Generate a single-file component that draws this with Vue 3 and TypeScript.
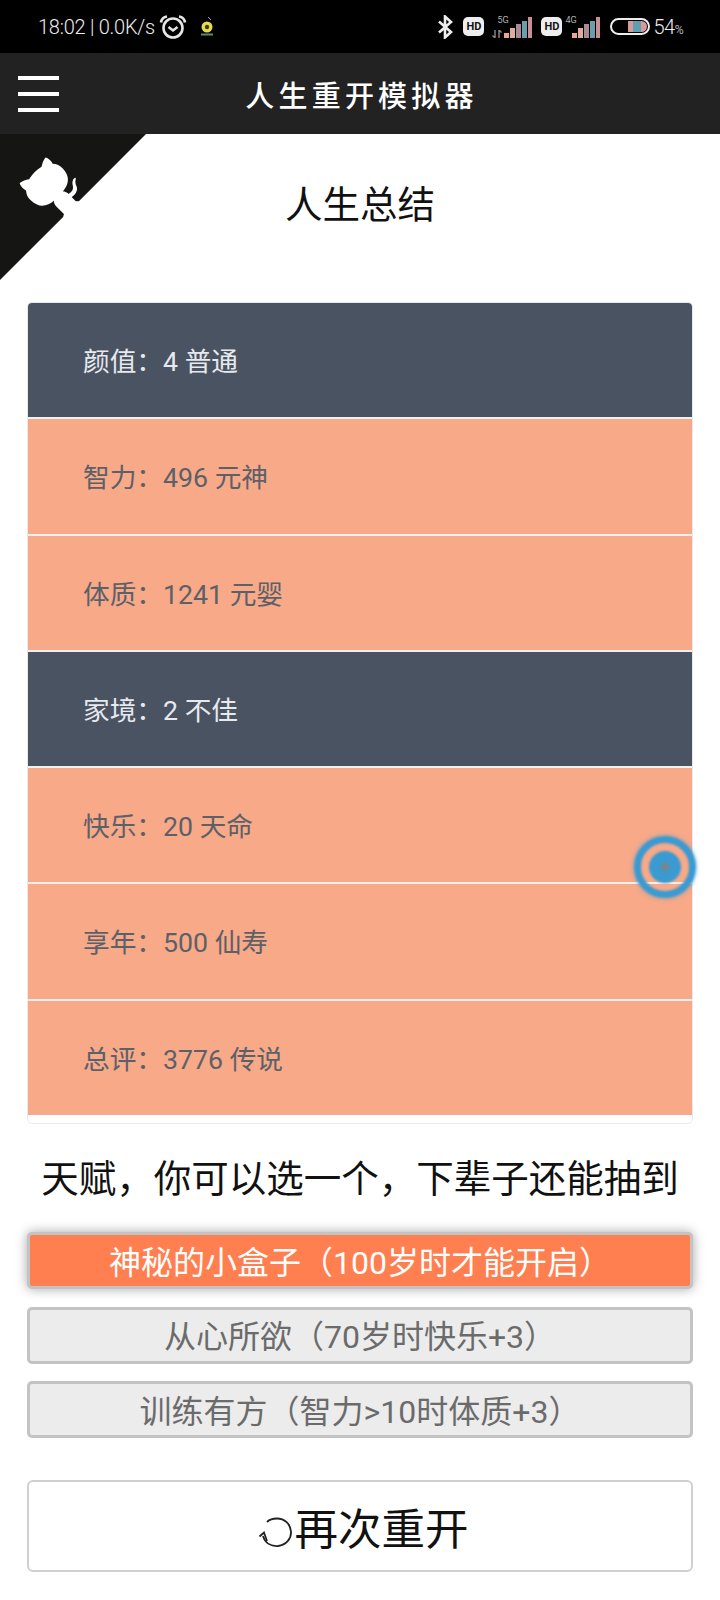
<template>
  <div class="page">
    <div class="status">
      <span class="clock">18:02 | 0.0K/s</span>
      <svg class="alarm" width="28" height="26" viewBox="0 0 28 26">
        <circle cx="14" cy="14" r="9.5" fill="none" stroke="#e6e6e6" stroke-width="2.6" />
        <path d="M9.5 13l4.5 3.5 4.5-3.5" fill="none" stroke="#e6e6e6" stroke-width="2.4" />
        <path d="M2 8.5C2.5 5 5 3 8 2.5M26 8.5C25.500 5 23 3 20 2.500" fill="none" stroke="#e6e6e6" stroke-width="2.6" />
      </svg>
      <svg class="dot-app" width="16" height="22" viewBox="0 0 16 22">
        <path d="M9 1l3 3" stroke="#8fa0a8" stroke-width="1" />
        <circle cx="8" cy="11" r="5.500" fill="#e7dc4e" />
        <circle cx="8" cy="11" r="2.200" fill="#3c3a16" />
        <rect x="2" y="17.500" width="12" height="2" fill="#5c8c74" />
      </svg>
      <div class="status-right">
        <svg class="bt" width="17" height="24" viewBox="0 0 17 24">
          <path d="M2 6.500l12 10.500-6 5.500V1.500l6 5.500-12 10.500" fill="none" stroke="#eee" stroke-width="2.600" />
        </svg>
        <span class="hd">HD</span>
        <div class="signal first">
          <span class="net">5G</span>
          <svg class="arrows" width="10" height="8" viewBox="0 0 10 8">
            <path d="M3 0v8M0.500 5.500L3 8M7 0v8M7 0l2.500 2.500" stroke="#8a8a8a" stroke-width="1.400" fill="none" />
          </svg>
          <i v-for="b in bars" :key="b.h" :style="{ height: b.h + 'px', background: b.c }" />
        </div>
        <span class="hd second">HD</span>
        <div class="signal">
          <span class="net four">4G</span>
          <i v-for="b in bars" :key="b.h" :style="{ height: b.h + 'px', background: b.c }" />
        </div>
        <div class="battery"><div class="level" /></div>
        <span class="pct">54<small>%</small></span>
      </div>
    </div>

    <header class="topbar">
      <div class="burger"><i /><i /><i /></div>
      <h1>人生重开模拟器</h1>
    </header>

    <main class="content">
      <svg class="corner" width="146" height="146" viewBox="0 0 250 250">
        <g transform="translate(250 0) scale(-1 1)">
          <path d="M0,0 L115,115 L130,115 L142,142 L250,250 L250,0 Z" fill="#151513" />
          <path fill="#fff" d="M128.3,109.0 C113.8,99.7 119.0,89.6 119.0,89.6 C122.0,82.7 120.5,78.6 120.5,78.6 C119.2,72.0 123.4,76.3 123.4,76.3 C127.3,80.9 125.5,87.3 125.5,87.3 C122.9,97.6 130.6,101.9 134.4,103.2" />
          <path fill="#fff" d="M115.0,115.0 C114.9,115.1 118.7,116.5 119.8,115.4 L133.7,101.6 C136.9,99.2 139.9,98.4 142.2,98.6 C133.8,88.0 127.5,74.4 143.8,58.0 C148.5,53.4 154.0,51.2 159.7,51.0 C160.3,49.4 163.2,43.6 171.4,40.1 C171.4,40.1 176.1,42.5 178.8,56.2 C183.1,58.6 187.2,61.8 190.9,65.4 C194.5,69.0 197.7,73.2 200.1,77.6 C213.8,80.2 216.3,84.9 216.3,84.9 C212.7,93.1 206.9,96.0 205.4,96.6 C205.1,102.4 203.0,107.8 198.3,112.5 C181.9,128.9 168.3,122.5 157.7,114.1 C157.9,116.9 156.7,120.9 152.7,124.9 L141.0,136.5 C139.8,137.7 141.6,141.9 141.8,141.8 Z" />
        </g>
      </svg>

      <h2 class="title">人生总结</h2>

      <ul class="summary">
        <li v-for="r in rows" :key="r.label" :class="r.dark ? 'dark' : 'warm'">{{ r.label }}：{{ r.value }}</li>
      </ul>

      <h2 class="talent-title">天赋，你可以选一个，下辈子还能抽到</h2>

      <div class="talents">
        <button v-for="(t, i) in talents" :key="t" :class="{ picked: i === 0 }">{{ t }}</button>
      </div>

      <button class="again">
        <svg width="36" height="32" viewBox="0 0 36 32">
          <path d="M5 20C7 27 13 30.500 20 30C28 29 33.500 23 33 15.500C32.500 8 26.500 2.500 19 2.500C15 2.500 11.500 3.500 9 6" fill="none" stroke="#222" stroke-width="1.800" />
          <path d="M1.500 20.500L6 16.500L9 25" fill="none" stroke="#222" stroke-width="1.800" />
        </svg>
        <span>再次重开</span>
      </button>

      <div class="ball"><div class="ball-core"><svg width="18" height="18" viewBox="0 0 14 14"><path d="M7 1C7.500 5 9 6.500 13 7C9 7.500 7.500 9 7 13C6.500 9 5 7.500 1 7C5 6.500 6.500 5 7 1Z" fill="#7f8487" /></svg></div></div>
    </main>
  </div>
</template>

<script setup lang="ts">
interface Row {
  label: string;
  value: string;
  dark: boolean;
}

const bars = [
  { h: 5, c: '#e8a88e' },
  { h: 10, c: '#dcae9e' },
  { h: 14, c: '#a98b98' },
  { h: 17, c: '#6d9cab' },
  { h: 21, c: '#c98f92' },
];

const rows: Row[] = [
  { label: '颜值', value: '4 普通', dark: true },
  { label: '智力', value: '496 元神', dark: false },
  { label: '体质', value: '1241 元婴', dark: false },
  { label: '家境', value: '2 不佳', dark: true },
  { label: '快乐', value: '20 天命', dark: false },
  { label: '享年', value: '500 仙寿', dark: false },
  { label: '总评', value: '3776 传说', dark: false },
];

const talents = ['神秘的小盒子（100岁时才能开启）', '从心所欲（70岁时快乐+3）', '训练有方（智力>10时体质+3）'];
</script>

<style>
html,
body {
  margin: 0;
  background: #fff;
}
</style>

<style scoped>
.page {
  width: 720px;
  height: 1600px;
  overflow: hidden;
  font-family: Roboto, "Noto Sans CJK SC", sans-serif;
  background: #fff;
}

.status {
  height: 53px;
  background: #000;
  color: #ececec;
  display: flex;
  align-items: center;
  padding-left: 38px;
  box-sizing: border-box;
}

.clock {
  font-size: 20px;
  font-weight: 300;
  letter-spacing: -0.25px;
}

.alarm {
  margin-left: 4px;
}

.dot-app {
  margin-left: 12px;
}

.status-right {
  margin-left: auto;
  padding-right: 37px;
  display: flex;
  align-items: center;
}

.hd {
  margin-left: 9px;
  width: 21px;
  height: 19px;
  border-radius: 5px;
  background: #eee;
  color: #111;
  font-size: 11px;
  font-weight: 700;
  line-height: 19px;
  text-align: center;
}

.hd.second {
  margin-left: 9px;
}

.signal {
  position: relative;
  width: 30px;
  height: 22px;
  margin-left: 8px;
  display: flex;
  align-items: flex-end;
  justify-content: flex-end;
  gap: 1.500px;
}

.signal.first {
  width: 40px;
}

.signal i {
  width: 4.400px;
  display: block;
}

.net {
  position: absolute;
  left: 5px;
  top: -1px;
  font-size: 9px;
  font-weight: 300;
  line-height: 10px;
}

.net.four {
  left: -5px;
}

.arrows {
  position: absolute;
  left: 0;
  bottom: 0;
}

.battery {
  margin-left: 10px;
  width: 40px;
  height: 17px;
  box-sizing: border-box;
  border: 2px solid #eee;
  border-radius: 9px;
  padding: 1px;
  display: flex;
  justify-content: flex-end;
}

.level {
  width: 19px;
  border-radius: 0 6px 6px 0;
  background: linear-gradient(90deg, #d79a9c 0 25%, #5f9db0 25% 70%, #d79a9c 70%);
}

.pct {
  margin-left: 3px;
  font-size: 20px;
  font-weight: 300;
  letter-spacing: -0.5px;
}

.pct small {
  font-size: 12px;
}

.topbar {
  height: 81px;
  background: #222;
  position: relative;
  display: flex;
  align-items: center;
  justify-content: center;
}

.burger {
  position: absolute;
  left: 18px;
  top: 23px;
  width: 41px;
  display: flex;
  flex-direction: column;
  gap: 12px;
}

.burger i {
  display: block;
  height: 4px;
  background: #fff;
}

.topbar h1 {
  margin: 0 0 0 3px;
  color: #fff;
  font-family: "Noto Sans CJK SC", sans-serif;
  font-size: 29px;
  font-weight: 500;
  letter-spacing: 4.200px;
}

.content {
  position: relative;
  padding: 46px 27px 0;
  height: 1466px;
  box-sizing: border-box;
}

.corner {
  position: absolute;
  left: 0;
  top: 0;
}

.title,
.talent-title {
  margin: 0;
  font-size: 37.500px;
  line-height: 50px;
  font-weight: 400;
  text-align: center;
  color: #111;
}

.summary {
  list-style: none;
  margin: 72px 0 0;
  padding: 0 0 8px;
  border: 1px solid #e6eaef;
  border-radius: 5px;
  overflow: hidden;
}

.summary li {
  height: 114.300px;
  box-sizing: content-box;
  padding-left: 55px;
  border-bottom: 2px solid #f1f1f1;
  font-size: 26.700px;
  line-height: 118px;
}

.summary li:last-child {
  border-bottom: 0;
}

.dark {
  background: #4a5362;
  color: #e6e9ee;
}

.warm {
  background: #f7a988;
  color: #5c6068;
}

.talent-title {
  margin-top: 30px;
}

.talents {
  margin-top: 28px;
  display: flex;
  flex-direction: column;
  gap: 17.500px;
}

.talents button {
  height: 57px;
  padding: 0 0 2px;
  box-sizing: border-box;
  border: 3px solid #c3c3c3;
  border-radius: 5px;
  background: #ececec;
  color: #6b6b6b;
  font-family: inherit;
  font-size: 32px;
}

.talents button.picked {
  background: #ff7f50;
  color: #fff;
  box-shadow: 0 0 12px rgba(0, 0, 0, 0.35);
}

.again {
  margin-top: 42px;
  width: 100%;
  height: 92px;
  padding: 0 0 0 6px;
  box-sizing: border-box;
  border: 2px solid #d0d0d0;
  border-radius: 6px;
  background: #fff;
  color: #111;
  font-family: inherit;
  font-size: 43.500px;
  display: flex;
  align-items: center;
  justify-content: center;
}

.again svg {
  margin-top: 12px;
  margin-right: 1px;
}

.ball {
  position: absolute;
  left: 634px;
  top: 702px;
  width: 62px;
  height: 62px;
  box-sizing: border-box;
  border: 7px solid #3a9ad2;
  border-radius: 50%;
  display: flex;
  align-items: center;
  justify-content: center;
  box-shadow: 0 0 4px rgba(58, 154, 210, 0.7);
  filter: blur(0.8px);
}

.ball-core {
  width: 32px;
  height: 32px;
  border-radius: 50%;
  background: #3a9ad2;
  display: flex;
  align-items: center;
  justify-content: center;
}
</style>
